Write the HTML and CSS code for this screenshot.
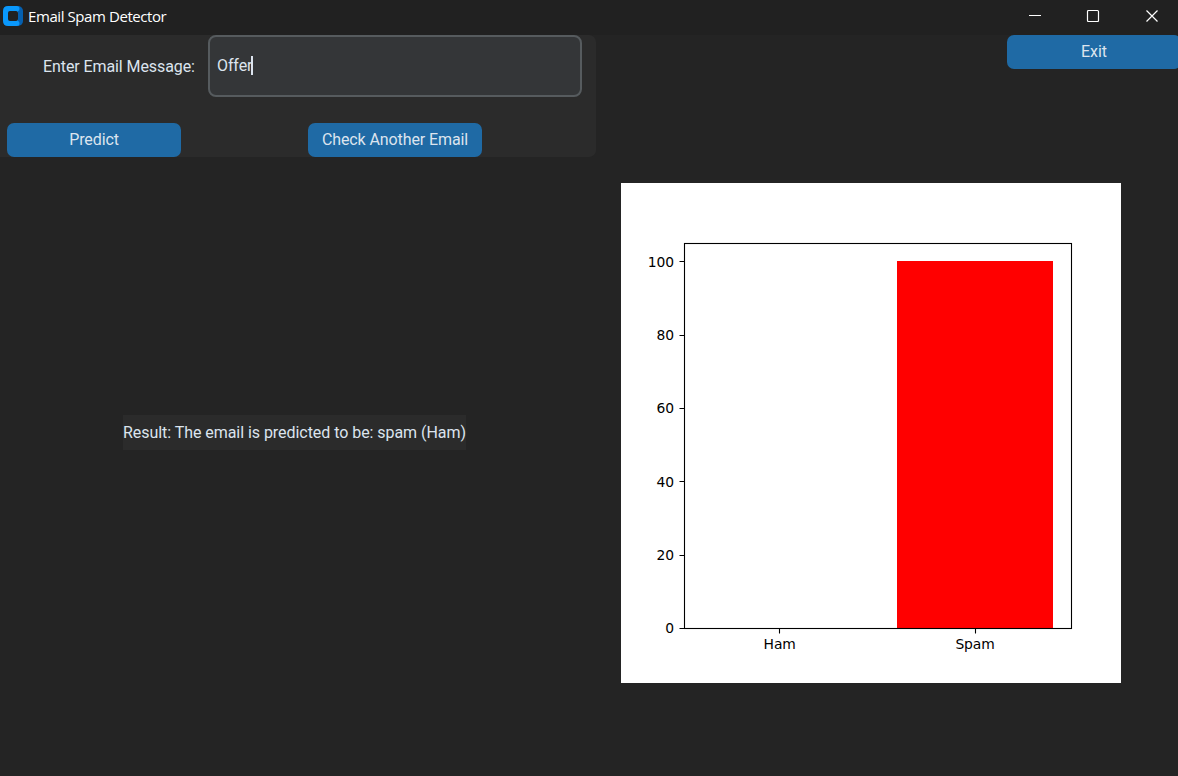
FILE: index.html
```html
<!DOCTYPE html>
<html lang="en">
<head>
<meta charset="utf-8">
<title>Email Spam Detector</title>
<link rel="stylesheet" href="styles.css">
</head>
<body>
<header class="titlebar">
  <svg class="app-icon" width="20" height="20" viewBox="0 0 20 20">
    <rect x="8" y="0" width="12" height="20" rx="5" fill="#0560b0"/>
    <path d="M5 0H13.500Q16.500 0 16.500 2.500Q16.500 5 15 5V15Q16.500 15 16.500 17.500Q16.500 20 13.500 20H5Q0 20 0 15V5Q0 0 5 0Z" fill="#0a98fb"/>
    <rect x="5" y="5" width="10" height="10" rx="2" fill="#212121"/>
  </svg>
  <span class="title">Email Spam Detector</span>
  <svg class="controls" width="134" height="14" viewBox="0 0 134 14" fill="none" stroke="#fff">
    <path d="M0 7.500H12"/>
    <rect x="58.500" y="2.500" width="11" height="11" rx="1" stroke-width="1.200"/>
    <path d="M117.500 2.500L128.500 13.500M128.500 2.500L117.500 13.500" stroke-width="1.200"/>
  </svg>
</header>
<main class="content">
  <section class="left">
    <form class="form">
      <div class="row entry-row">
        <label class="label">Enter Email Message:</label>
        <div class="entry"><span class="entry-text">Offer</span><i class="caret"></i></div>
      </div>
      <div class="row button-row">
        <button type="button" class="button">Predict</button>
        <button type="button" class="button">Check Another Email</button>
      </div>
    </form>
    <p class="result"><span class="result-text">Result: The email is predicted to be: spam (Ham)</span></p>
  </section>
  <section class="right">
    <button type="button" class="button exit">Exit</button>
    <svg class="chart" width="500" height="500" viewBox="0 0 500 500">
      <rect width="500" height="500" fill="#fff"/>
      <rect x="276" y="78" width="156" height="367" fill="#f00"/>
      <g fill="none" stroke="#000" stroke-width="1.1">
        <rect x="63.5" y="60.5" width="387" height="385"/>
        <path d="M58.5 78.5H63M58.5 152.5H63M58.5 225.5H63M58.5 298.5H63M58.5 372.5H63M58.5 445.5H63M158.5 446V450.5M354.5 446V450.5"/>
      </g>
      <g class="ticks" text-anchor="end">
        <text x="53" y="84">100</text>
        <text x="53" y="157">80</text>
        <text x="53" y="230">60</text>
        <text x="53" y="304">40</text>
        <text x="53" y="377">20</text>
        <text x="53" y="450">0</text>
      </g>
      <g class="ticks" text-anchor="middle">
        <text x="158.7" y="466">Ham</text>
        <text x="354" y="466">Spam</text>
      </g>
    </svg>
  </section>
</main>
</body>
</html>
```
FILE: styles.css
```css
* { box-sizing: border-box; }
body {
  margin: 0;
  width: 1178px;
  height: 776px;
  overflow: hidden;
  display: flex;
  flex-direction: column;
  background: #242424;
  color: #dce4ee;
  font: 16px/20px Roboto, sans-serif;
}
.titlebar {
  flex: none;
  height: 35px;
  display: flex;
  align-items: flex-start;
  padding: 6px 15px 0 3px;
  background: #212121;
  color: #fff;
}
.title {
  margin-left: 5px;
  font: 15px/20px "Open Sans", sans-serif;
  letter-spacing: -0.42px;
}
.controls { margin: 2px 0 0 auto; }
.content {
  flex: 1;
  display: grid;
  grid-template-columns: 596px 1fr;
}
.left, .right { display: flex; flex-direction: column; }
.form {
  height: 122px;
  border-radius: 0 7px 7px 0;
  background: #2b2b2b;
}
.row { display: flex; }
.entry-row { height: 62px; align-items: center; }
.label {
  width: 152px;
  margin: 0 13px 0 43px;
  padding-top: 2px;
  letter-spacing: -0.09px;
  white-space: nowrap;
}
.entry {
  width: 374px;
  height: 62px;
  display: flex;
  align-items: center;
  padding-left: 7px;
  border: 2px solid #565b5e;
  border-radius: 8px;
  background: #343638;
}
.entry-text { letter-spacing: -0.1px; }
.caret { width: 2px; height: 19px; margin: 0 0 1px -1px; background: #dce4ee; }
.button-row { margin-top: 26px; padding-left: 7px; gap: 127px; }
.button {
  width: 174px;
  height: 34px;
  padding: 0;
  border: 0;
  border-radius: 7px;
  background: #1f6aa5;
  color: #dce4ee;
  font: inherit;
  letter-spacing: -0.1px;
  white-space: nowrap;
}
.result { margin: 258px 0 0 123px; display: flex; }
.result-text {
  width: 343px;
  height: 35px;
  line-height: 35px;
  letter-spacing: -0.05px;
  background: #2b2b2b;
  white-space: nowrap;
}
.exit { align-self: flex-end; margin-right: -3px; }
.chart { display: block; margin: 114px 0 0 25px; }
.ticks { font: 13.89px "DejaVu Sans", sans-serif; letter-spacing: -0.1px; fill: #000; }
```
